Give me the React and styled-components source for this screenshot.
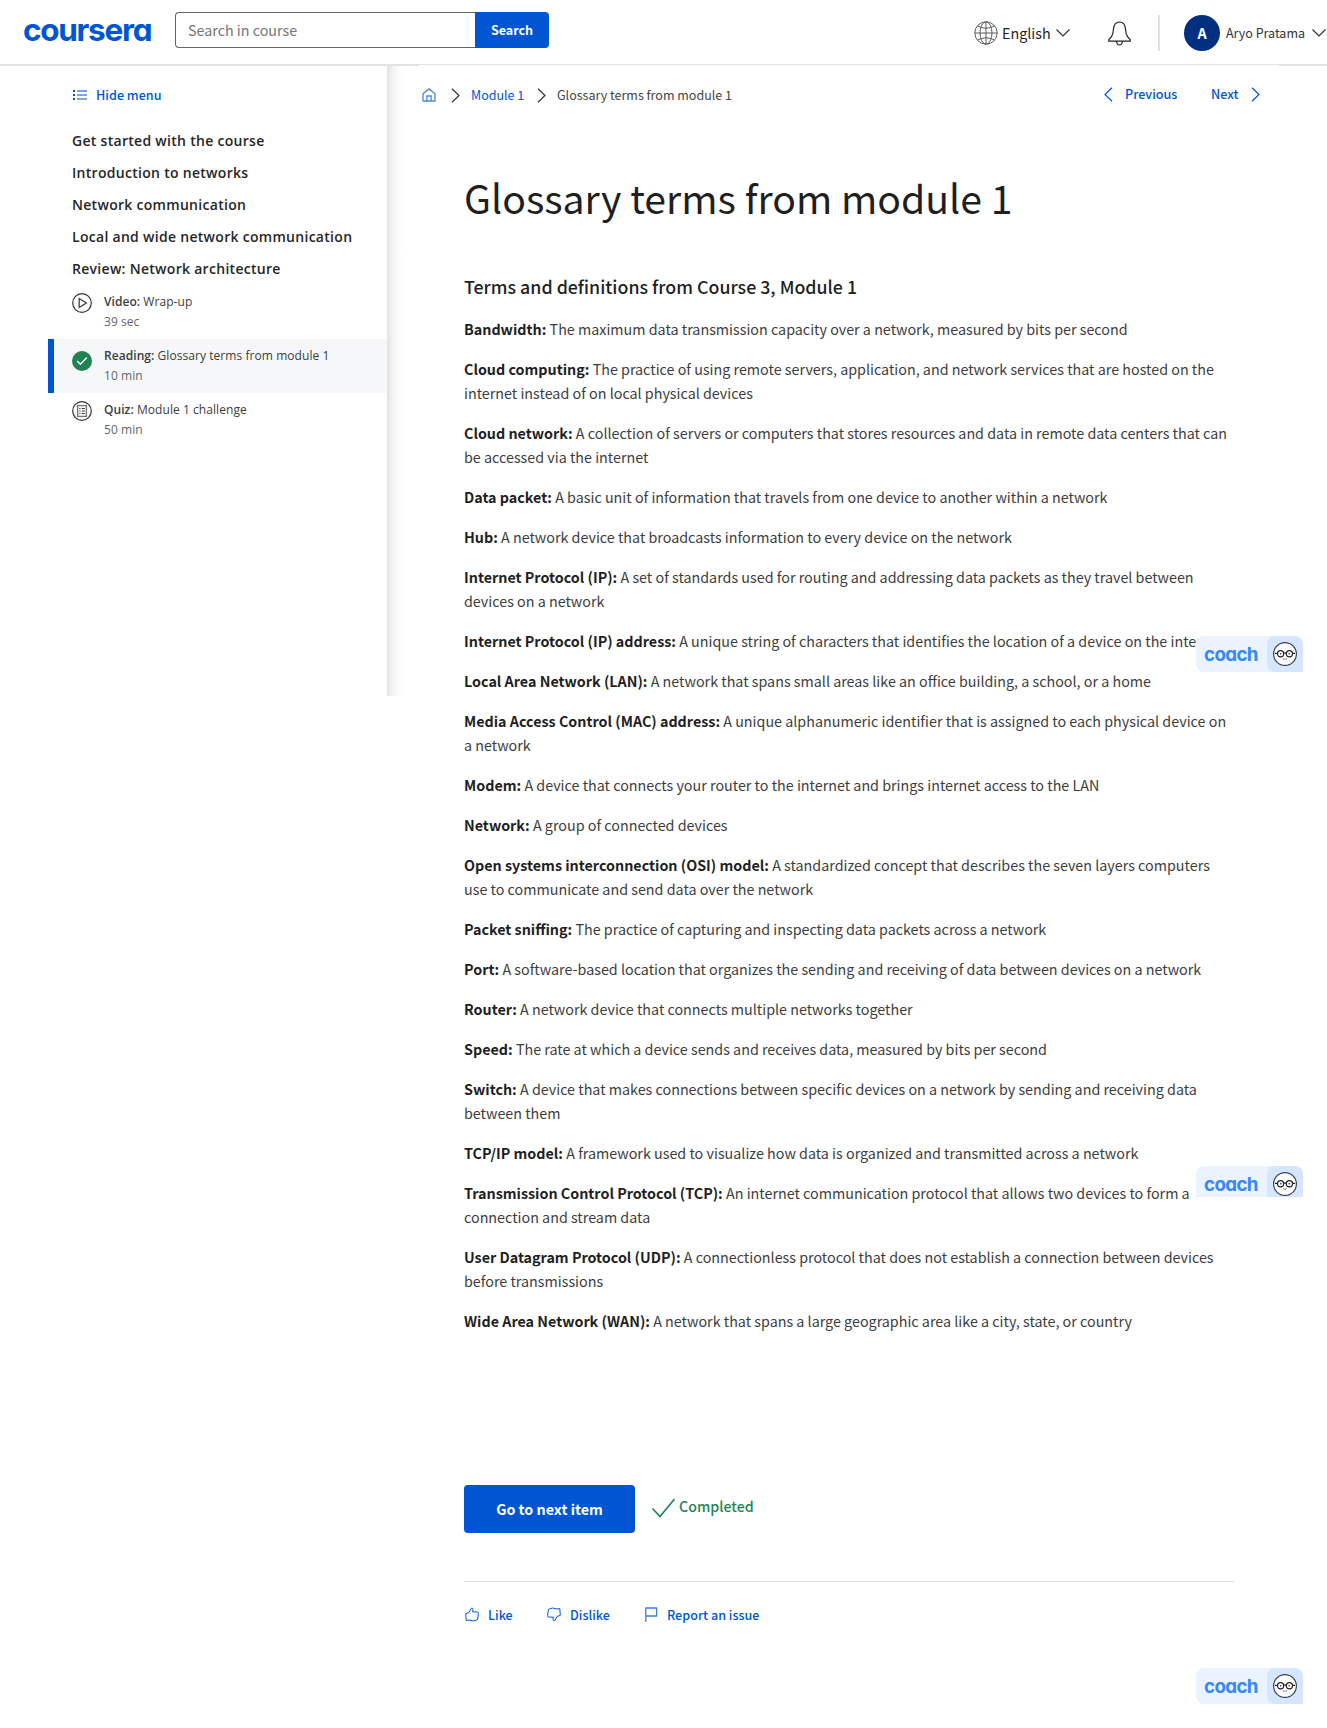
import React from "react";
import styled, { createGlobalStyle } from "styled-components";

const sans = `"Noto Sans CJK SC", "Noto Sans", sans-serif`;
const open = `"Open Sans", "Noto Sans", sans-serif`;
const geo = `Inter, "Open Sans", sans-serif`;
const blue = "#0056d2";

const Global = createGlobalStyle`
  *, *::before, *::after { box-sizing: border-box; }
  body { margin: 0; background: #fff; color: #1f1f1f; font-family: ${sans}; }
  svg { display: block; flex: none; }
`;

const Page = styled.div`
  position: relative;
  width: 1327px;
  height: 1728px;
  overflow: hidden;
`;

const Header = styled.header`
  display: flex;
  align-items: flex-start;
  height: 66px;
  border-bottom: 2px solid #e3e3e3;
`;

const Logo = styled.div`
  width: 151px;
  padding-left: 23px;
  margin-right: 24px;
  font: 700 31.5px/36px ${geo};
  font-feature-settings: "cv11";
  letter-spacing: -1.3px;
  color: ${blue};
  white-space: nowrap;
  padding-top: 12px;
`;

const SearchForm = styled.div`
  display: flex;
  width: 374px;
  height: 36px;
  margin-top: 12px;
`;

const SearchField = styled.div`
  width: 300px;
  border: 1px solid #636363;
  border-right: 0;
  border-radius: 4px 0 0 4px;
  padding-left: 12px;
  font-size: 14.3px;
  line-height: 33px;
  color: #757575;
`;

const SearchButton = styled.div`
  flex: 1;
  border-radius: 0 4px 4px 0;
  background: ${blue};
  color: #fff;
  font-size: 12.5px;
  font-weight: 700;
  line-height: 36px;
  text-align: center;
`;

const HeaderTools = styled.div`
  display: flex;
  align-items: center;
  width: 353px;
  height: 66px;
  margin-left: auto;
`;

const Language = styled.span`
  width: 48px;
  margin: 0 6px 0 4px;
  padding-bottom: 1px;
  font-size: 14.3px;
  white-space: nowrap;
`;

const Rule = styled.div`
  width: 2px;
  height: 36px;
  margin: 0 24px 0 27px;
  background: #e1e1e1;
`;

const Avatar = styled.div`
  width: 36px;
  height: 36px;
  border-radius: 50%;
  background: #00307f;
  color: #fff;
  font-size: 14.3px;
  font-weight: 700;
  line-height: 36px;
  text-align: center;
`;

const UserName = styled.span`
  width: 79px;
  margin: 0 7px 0 6px;
  padding-bottom: 1px;
  font-size: 12.5px;
  color: #333;
  white-space: nowrap;
`;

const Body = styled.div`
  display: flex;
`;

const Sidebar = styled.aside`
  width: 387px;
  height: 630px;
  padding-top: 16px;
`;

const Shade = styled.div`
  width: 32px;
  height: 630px;
  background: linear-gradient(to right, #e0e2e2 0, #f4f4f4 6px, #fdfdfd 13px, #fff 16px);
`;

const HideMenu = styled.div`
  display: flex;
  align-items: center;
  height: 26px;
  padding: 0 0 0 72px;
  gap: 9px;
  color: ${blue};
  font-size: 12.6px;
  font-weight: 500;
`;

const HideLabel = styled.span`
  padding-bottom: 2px;
`;

const Sections = styled.div`
  padding: 17px 0 0 72px;
  font: 600 14px/32px ${open};
  letter-spacing: 0.29px;
  color: #262626;
`;

const Item = styled.div`
  display: flex;
  height: 54px;
  margin-left: 48px;
  padding: 7px 0 0 ${(p) => (p.$active ? 18 : 24)}px;
  gap: 12px;
  border-left: ${(p) => (p.$active ? `6px solid ${blue}` : "0")};
  background: ${(p) => (p.$active ? "#f5f7f8" : "transparent")};
  font: 400 12px/20px ${open};
  letter-spacing: 0.06px;
  color: #3c3c3c;
`;

const ItemIcon = styled.div`
  padding-top: ${(p) => p.$top}px;
`;

const Duration = styled.div`
  color: #666;
`;

const Strong = styled.b`
  font-weight: ${(p) => p.$weight || 700};
`;

const Main = styled.main`
  position: relative;
  width: 860px;
  margin-top: -1px;
  padding: 17px 0 0;
  background: #fff;
`;

const TopNav = styled.nav`
  display: flex;
  align-items: center;
  height: 26px;
  padding-left: 3px;
  font-size: 12.5px;
  color: ${blue};
  white-space: nowrap;
`;

const Crumb = styled.span`
  width: ${(p) => p.$w}px;
  margin: 0 ${(p) => p.$r || 0}px 0 ${(p) => p.$l}px;
  padding-bottom: 2px;
  color: ${(p) => (p.$dark ? "#444" : blue)};
`;

const Pager = styled.div`
  display: flex;
  align-items: center;
  margin: -2px 19px 0 auto;
  font-size: 12.6px;
  font-weight: 500;
`;

const PagerLabel = styled.span`
  width: ${(p) => p.$w}px;
  margin: 0 ${(p) => p.$r}px 0 ${(p) => p.$l}px;
  padding-bottom: 2px;
`;

const Article = styled.article`
  width: 815px;
  padding-left: 45px;
`;

const Title = styled.h1`
  margin: 61px 0 0;
  font-size: 39.2px;
  line-height: 56px;
  font-weight: 400;
  white-space: nowrap;
`;

const Subtitle = styled.h2`
  margin: 49px 0 19px;
  font-size: 17.8px;
  line-height: 24px;
  font-weight: 500;
`;

const Term = styled.p`
  margin: 0 0 16px;
  font-size: 14.32px;
  line-height: 24px;
  color: #3d3d3d;
  white-space: nowrap;

  b { color: #1f1f1f; }
`;

const Actions = styled.div`
  display: flex;
  margin-top: 152px;
`;

const NextButton = styled.div`
  width: 171px;
  height: 48px;
  margin-right: 16px;
  border-radius: 4px;
  background: ${blue};
  color: #fff;
  font-size: 14.3px;
  font-weight: 700;
  line-height: 47px;
  text-align: center;
`;

const Done = styled.div`
  display: flex;
  align-items: center;
  gap: 3px;
  height: 46px;
  color: #1f8354;
  font-size: 14.2px;
  font-weight: 500;
`;

const DoneLabel = styled.span`
  padding-bottom: 4px;
`;

const Feedback = styled.div`
  display: flex;
  align-items: center;
  height: 68px;
  margin-top: 48px;
  border-top: 1px solid #dadada;
  color: ${blue};
  font-size: 12.6px;
  font-weight: 500;
`;

const FeedbackItem = styled.div`
  display: flex;
  align-items: center;
  width: ${(p) => p.$w}px;
  gap: 8px;
  margin-top: -2px;
  white-space: nowrap;
`;

const Coach = styled.div`
  position: absolute;
  left: 1196px;
  top: ${(p) => p.$top}px;
  display: flex;
  width: 107px;
  height: ${(p) => p.$h || 36}px;
  overflow: hidden;
  border-radius: ${(p) => (p.$h ? "8px 8px 0 0" : "8px 8px 0 8px")};
  background: #ebf3ff;
`;

const CoachLabel = styled.div`
  width: 71px;
  padding-left: 8px;
  font: 700 18.7px/37px ${geo};
  font-feature-settings: "cv11";
  letter-spacing: -0.6px;
  color: #3587fc;
`;

const CoachFace = styled.div`
  width: 36px;
  height: 36px;
  padding: 6px;
  border-radius: 8px 8px 0 8px;
  background: #d6e6ff;
`;

const Chevron = ({ dir, w = 9, h = 15, color = "#333" }) => {
  const d = { right: "M1 .8 8 7.5 1 14.2", left: "M8 .8 1 7.5 8 14.2", down: "M.5 .5 7 7 13.5 .5" }[dir];
  return (
    <svg width={w} height={h} fill="none" stroke={color} strokeWidth="1.2">
      <path d={d} />
    </svg>
  );
};

const BellIcon = styled.svg`
  margin-left: 38px;
`;

const CoachBadge = ({ top, h }) => (
  <Coach $top={top} $h={h}>
    <CoachLabel>coach</CoachLabel>
    <CoachFace>
      <svg width="24" height="24" fill="none" stroke="#222" strokeWidth="1.2">
        <circle cx="12" cy="12" r="11.4" fill="#fff" stroke="#38425a" />
        <circle cx="7.6" cy="11.8" r="3.1" />
        <circle cx="16.4" cy="11.8" r="3.1" />
        <path d="M2 11.3h2.3M19.7 11.3H22M10.8 11.3q1.2-.8 2.4 0" />
        <path d="M10 16.6q2 1.5 4 0" strokeWidth=".9" stroke="#777" />
        <circle cx="7.8" cy="11.8" r=".8" fill="#222" stroke="none" />
        <circle cx="16.2" cy="11.8" r=".8" fill="#222" stroke="none" />
      </svg>
    </CoachFace>
  </Coach>
);

const thumb = "M.7 6.6 4 5.6 6.3 1.2Q7.9.7 8 2.3L7.6 4.9H12.4Q13.5 5 13.4 6.2L12.7 12Q12.5 13 11.4 13.2L8.5 14 4 13 1.2 13.4Z";

const terms = [
  ["Bandwidth:", "The maximum data transmission capacity over a network, measured by bits per second"],
  ["Cloud computing:", "The practice of using remote servers, application, and network services that are hosted on the", "internet instead of on local physical devices"],
  ["Cloud network:", "A collection of servers or computers that stores resources and data in remote data centers that can", "be accessed via the internet"],
  ["Data packet:", "A basic unit of information that travels from one device to another within a network"],
  ["Hub:", "A network device that broadcasts information to every device on the network"],
  ["Internet Protocol (IP):", "A set of standards used for routing and addressing data packets as they travel between", "devices on a network"],
  ["Internet Protocol (IP) address:", "A unique string of characters that identifies the location of a device on the internet"],
  ["Local Area Network (LAN):", "A network that spans small areas like an office building, a school, or a home"],
  ["Media Access Control (MAC) address:", "A unique alphanumeric identifier that is assigned to each physical device on", "a network"],
  ["Modem:", "A device that connects your router to the internet and brings internet access to the LAN"],
  ["Network:", "A group of connected devices"],
  ["Open systems interconnection (OSI) model:", "A standardized concept that describes the seven layers computers", "use to communicate and send data over the network"],
  ["Packet sniffing:", "The practice of capturing and inspecting data packets across a network"],
  ["Port:", "A software-based location that organizes the sending and receiving of data between devices on a network"],
  ["Router:", "A network device that connects multiple networks together"],
  ["Speed:", "The rate at which a device sends and receives data, measured by bits per second"],
  ["Switch:", "A device that makes connections between specific devices on a network by sending and receiving data", "between them"],
  ["TCP/IP model:", "A framework used to visualize how data is organized and transmitted across a network"],
  ["Transmission Control Protocol (TCP):", "An internet communication protocol that allows two devices to form a", "connection and stream data"],
  ["User Datagram Protocol (UDP):", "A connectionless protocol that does not establish a connection between devices", "before transmissions"],
  ["Wide Area Network (WAN):", "A network that spans a large geographic area like a city, state, or country"],
];

const sections = [
  "Get started with the course",
  "Introduction to networks",
  "Network communication",
  "Local and wide network communication",
  "Review: Network architecture",
];

export default function App() {
  return (
    <Page>
      <Global />
      <Header>
        <Logo>coursera</Logo>
        <SearchForm>
          <SearchField>Search in course</SearchField>
          <SearchButton>Search</SearchButton>
        </SearchForm>
        <HeaderTools>
          <svg width="24" height="24" fill="none" stroke="#5c5c5c" strokeWidth="1">
            <circle cx="12" cy="12" r="11.2" />
            <ellipse cx="12" cy="12" rx="6" ry="11.2" />
            <path d="M12 .8v22.4M.8 12h22.4M3.6 5Q12 9.5 20.4 5M3.6 19Q12 14.5 20.4 19" />
          </svg>
          <Language>English</Language>
          <Chevron dir="down" w={14} h={8} />
          <BellIcon width="23" height="25" fill="none" stroke="#222" strokeWidth="1.2">
            <path d="M.8 20.2V18.6Q5 15.5 5.4 8.5Q6 1 11.5 1T17.6 8.5Q18 15.5 22.2 18.6V20.2ZM8.6 20.5Q9 24 11.5 24T14.4 20.5" />
          </BellIcon>
          <Rule />
          <Avatar>A</Avatar>
          <UserName>Aryo Pratama</UserName>
          <Chevron dir="down" w={14} h={8} />
        </HeaderTools>
      </Header>
      <Body>
        <Sidebar>
          <HideMenu>
            <svg width="15" height="12" fill="none" strokeWidth="2">
              <path d="M1 2h2M1 6h2M1 10h2" stroke={blue} />
              <path d="M5 2h10M5 6h10M5 10h10" stroke="#7aa6e8" />
            </svg>
            <HideLabel>Hide menu</HideLabel>
          </HideMenu>
          <Sections>
            {sections.map((s) => (
              <div key={s}>{s}</div>
            ))}
          </Sections>
          <Item>
            <ItemIcon $top={1}>
              <svg width="20" height="20" fill="none" stroke="#333" strokeWidth="1.2">
                <circle cx="10" cy="10" r="9.3" />
                <path d="M7.2 5.6v8.8L14.4 10Z" />
              </svg>
            </ItemIcon>
            <div>
              <Strong $weight={600}>Video:</Strong> Wrap-up
              <Duration>39 sec</Duration>
            </div>
          </Item>
          <Item $active>
            <ItemIcon $top={5}>
              <svg width="20" height="20" fill="none">
                <circle cx="10" cy="10" r="10" fill="#1f8354" />
                <path d="m5.2 10 3.2 3.2 6.4-6.6" stroke="#fff" strokeWidth="1.4" />
              </svg>
            </ItemIcon>
            <div>
              <Strong $weight={600}>Reading:</Strong> Glossary terms from module 1
              <Duration>10 min</Duration>
            </div>
          </Item>
          <Item>
            <ItemIcon $top={1}>
              <svg width="20" height="20" fill="none" stroke="#333" strokeWidth="1.2">
                <circle cx="10" cy="10" r="9.3" />
                <rect x="5.6" y="4.6" width="8.8" height="10.8" stroke="#777" strokeWidth="1.4" />
                <path d="M7.3 7.5h1.2M9.8 7.5h3M7.3 10h1.2M9.8 10h3M7.3 12.5h1.2M9.8 12.5h3" />
              </svg>
            </ItemIcon>
            <div>
              <Strong $weight={600}>Quiz:</Strong> Module 1 challenge
              <Duration>50 min</Duration>
            </div>
          </Item>
        </Sidebar>
        <Shade />
        <Main>
          <TopNav>
            <svg width="14" height="14" fill="none" stroke="#4a86e0" strokeWidth="1.3">
              <path d="M1 5.8 7 .9 13 5.8V13H1ZM4.9 13V8h4.2v5" />
            </svg>
            <Crumb $w={0} $l={15} />
            <Chevron dir="right" />
            <Crumb $w={53} $l={11} $r={13}>Module 1</Crumb>
            <Chevron dir="right" />
            <Crumb $w={176} $l={11} $dark>Glossary terms from module 1</Crumb>
            <Pager>
              <Chevron dir="left" color={blue} />
              <PagerLabel $w={54} $l={12} $r={32}>Previous</PagerLabel>
              <PagerLabel $w={28} $l={0} $r={12}>Next</PagerLabel>
              <Chevron dir="right" color={blue} />
            </Pager>
          </TopNav>
          <Article>
            <Title>Glossary terms from module 1</Title>
            <Subtitle>Terms and definitions from Course 3, Module 1</Subtitle>
            {terms.map(([name, first, second]) => (
              <Term key={name}>
                <Strong>{name}</Strong> {first}
                {second && <br />}
                {second}
              </Term>
            ))}
            <Actions>
              <NextButton>Go to next item</NextButton>
              <Done>
                <svg width="25" height="20" fill="none" stroke="#1f8354" strokeWidth="1.7">
                  <path d="m1.5 10.5 7.5 8L23.5 1" />
                </svg>
                <DoneLabel>Completed</DoneLabel>
              </Done>
            </Actions>
            <Feedback>
              <FeedbackItem $w={82}>
                <svg width="16" height="15" fill="none" stroke={blue}>
                  <path d={thumb} transform="translate(1 0)" />
                </svg>
                Like
              </FeedbackItem>
              <FeedbackItem $w={97}>
                <svg width="16" height="15" fill="none" stroke={blue}>
                  <path d={thumb} transform="translate(15 15) rotate(180)" />
                </svg>
                Dislike
              </FeedbackItem>
              <FeedbackItem $w={130}>
                <svg width="16" height="15" fill="none" stroke="#3f7edc" strokeWidth="1.3">
                  <path d="M2.8 15V1H13.6V9H2.8" />
                </svg>
                Report an issue
              </FeedbackItem>
            </Feedback>
          </Article>
        </Main>
      </Body>
      <CoachBadge top={636} />
      <CoachBadge top={1166} h={31} />
      <CoachBadge top={1668} />
    </Page>
  );
}
